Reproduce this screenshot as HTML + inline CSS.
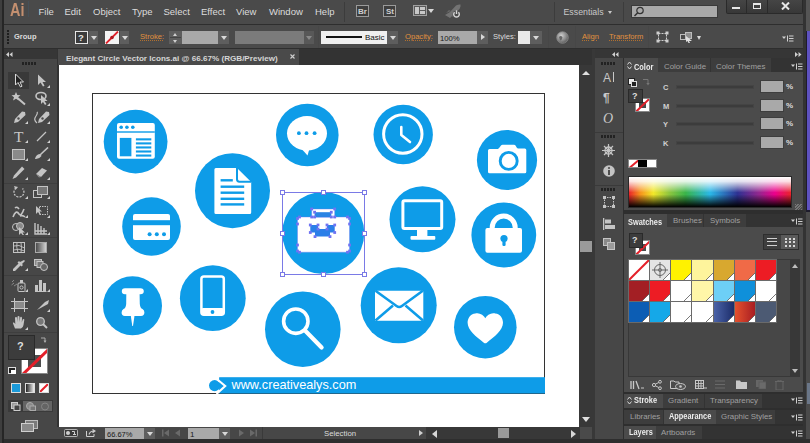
<!DOCTYPE html>
<html><head><meta charset="utf-8">
<style>
*{margin:0;padding:0;box-sizing:border-box}
html,body{width:810px;height:443px;overflow:hidden;background:#2b2b2b;font-family:"Liberation Sans",sans-serif;color:#dcdcdc}
.a{position:absolute}
.t{position:absolute;white-space:nowrap;line-height:1}
.sep{position:absolute;width:1px;background:#3c3c3c}
.dd{position:absolute;background:#5e5e5e}
.dd:after{content:"";position:absolute;left:50%;top:50%;margin-left:-3px;margin-top:-2px;border-left:3px solid transparent;border-right:3px solid transparent;border-top:4px solid #d8d8d8}
.dim:after{border-top-color:#8a8a8a}
.org{color:#e0913f;text-decoration:underline dotted;text-decoration-color:#b07030;text-underline-offset:1px}
</style></head><body>

<!-- MENU BAR -->
<div class="a" style="left:0;top:0;width:810px;height:24px;background:#4a4a4a"></div>

<div class="t" style="left:9.5px;top:0.8px;font-size:18px;font-weight:bold;color:#c49070;transform:scaleX(0.8);transform-origin:left">Ai</div><div class="a" style="left:28px;top:1px;width:1px;height:16px;background:#465058"></div>
<div class="t" style="left:38.5px;top:7px;font-size:9.5px">File</div>
<div class="t" style="left:64.5px;top:7px;font-size:9.5px">Edit</div>
<div class="t" style="left:93px;top:7px;font-size:9.5px">Object</div>
<div class="t" style="left:132px;top:7px;font-size:9.5px">Type</div>
<div class="t" style="left:163.5px;top:7px;font-size:9.5px">Select</div>
<div class="t" style="left:201px;top:7px;font-size:9.5px">Effect</div>
<div class="t" style="left:236px;top:7px;font-size:9.5px">View</div>
<div class="t" style="left:269px;top:7px;font-size:9.5px">Window</div>
<div class="t" style="left:315px;top:7px;font-size:9.5px">Help</div>
<div class="sep" style="left:344px;top:2px;height:20px"></div>
<div class="a" style="left:356px;top:5px;width:13px;height:12px;border:1px solid #9a9a9a;background:#3e3e3e"></div>
<div class="t" style="left:358px;top:7.5px;font-size:8px;font-weight:bold;color:#d0d0d0">Br</div>
<div class="a" style="left:383px;top:5px;width:13px;height:12px;border:1px solid #9a9a9a;background:#3e3e3e"></div>
<div class="t" style="left:386px;top:7.5px;font-size:8px;font-weight:bold;color:#d0d0d0">St</div>
<div class="a" style="left:413px;top:5px;width:14px;height:11px;border:1px solid #a0a0a0;background:#5a5a5a"></div>
<div class="a" style="left:415px;top:7px;width:4px;height:7px;background:#c8c8c8"></div>
<div class="a" style="left:420px;top:7px;width:5px;height:3px;background:#c8c8c8"></div>
<div class="a" style="left:420px;top:11px;width:5px;height:3px;background:#c8c8c8"></div>
<div class="a" style="left:428px;top:9px;border-left:3px solid transparent;border-right:3px solid transparent;border-top:4px solid #d8d8d8"></div>
<svg class="a" style="left:444px;top:4px" width="19" height="15" viewBox="0 0 19 15"><path d="M1 11 L6 8 L12 1.5 Q15 0 16.5 0.5 Q17 2 15.5 5 L9 11 L6 14 Z" fill="#737373"/><path d="M2 9 L5 6 L7 7Z M8 12 L11 9 L9 13Z" fill="#6a6a6a"/><circle cx="12.5" cy="10.3" r="3.7" fill="#4a4a4a"/><path d="M10.6 8.2 A2.8 2.8 0 1 0 14.4 8.2" fill="none" stroke="#d6d6d6" stroke-width="1.4"/><path d="M12.5 6.3 V10" stroke="#d6d6d6" stroke-width="1.4"/></svg>
<div class="sep" style="left:554px;top:2px;height:20px"></div>
<div class="t" style="left:563.5px;top:7.5px;font-size:8.8px;color:#c8c8c8">Essentials</div>
<div class="a" style="left:608px;top:11px;border-left:2.5px solid transparent;border-right:2.5px solid transparent;border-top:3px solid #c8c8c8"></div>
<div class="sep" style="left:623px;top:2px;height:20px"></div>
<div class="a" style="left:631px;top:5px;width:87px;height:13px;background:#a9a9a9;border:1px solid #3a3a3a"></div>
<svg class="a" style="left:633px;top:6px" width="12" height="11" viewBox="0 0 12 11"><circle cx="7" cy="4.5" r="3.2" fill="none" stroke="#333" stroke-width="1.2"/><path d="M4.7 6.8 L1.5 10" stroke="#333" stroke-width="1.5"/></svg>
<div class="a" style="left:726px;top:0;width:77px;height:14px;background:linear-gradient(#454545,#383838);border:1px solid #2a2a2a;border-top:none;border-radius:0 0 2px 2px"></div>
<div class="a" style="left:746px;top:0;width:1px;height:13px;background:#2a2a2a"></div>
<div class="a" style="left:767px;top:0;width:1px;height:13px;background:#2a2a2a"></div>
<div class="a" style="left:732px;top:7px;width:8px;height:2px;background:#e6e6e6"></div>
<div class="a" style="left:753px;top:3px;width:8px;height:6px;border:1.3px solid #e6e6e6;border-top-width:2px"></div>
<svg class="a" style="left:781px;top:2px" width="9" height="8" viewBox="0 0 9 8"><path d="M1 0.5 L8 7.5 M8 0.5 L1 7.5" stroke="#e6e6e6" stroke-width="2"/></svg>

<!-- CONTROL BAR -->
<div class="a" style="left:0;top:24px;width:810px;height:25px;background:#4a4a4a;border-top:1px solid #2e2e2e;border-bottom:1px solid #2e2e2e"></div>
<div class="a" style="left:7px;top:30px;width:2px;height:14px;background:repeating-linear-gradient(#1e1e1e 0 2px,transparent 2px 3px)"></div>
<div class="t" style="left:14px;top:33px;font-size:7.5px;font-weight:bold">Group</div>
<div class="a" style="left:75px;top:31px;width:13px;height:13px;border:1px solid #e6e6e6;background:#3b3b3b"></div>
<div class="t" style="left:78px;top:33px;font-size:9.5px;font-weight:bold;color:#e6e6e6">?</div>
<div class="dd" style="left:89px;top:31px;width:9px;height:13px"></div>
<svg class="a" style="left:105px;top:31px" width="14" height="13" viewBox="0 0 14 13"><rect x="0" y="0" width="14" height="13" fill="#f4f4f4"/><path d="M1 12.5 L13 0.5" stroke="#e0202a" stroke-width="1.8"/><circle cx="7" cy="6.5" r="1.8" fill="#b01820"/></svg>
<div class="dd" style="left:120px;top:31px;width:9px;height:13px"></div>
<div class="t org" style="left:140px;top:33px;font-size:7.6px">Stroke:</div>
<div class="a" style="left:169px;top:31px;width:13px;height:13px;background:#5e5e5e"></div>
<div class="a" style="left:173px;top:33px;border-left:2.5px solid transparent;border-right:2.5px solid transparent;border-bottom:3px solid #cfcfcf"></div>
<div class="a" style="left:173px;top:40px;border-left:2.5px solid transparent;border-right:2.5px solid transparent;border-top:3px solid #cfcfcf"></div>
<div class="a" style="left:170px;top:37px;width:11px;height:1px;background:#444"></div>
<div class="a" style="left:182px;top:31px;width:36px;height:13px;background:#a9a9a9"></div>
<div class="dd" style="left:218px;top:31px;width:11px;height:13px"></div>
<div class="a" style="left:235px;top:31px;width:69px;height:13px;background:#7b7b7b"></div>
<div class="dd dim" style="left:304px;top:31px;width:10px;height:13px;background:#585858"></div>
<div class="sep" style="left:318px;top:26px;height:22px;background:#474747"></div>
<div class="a" style="left:321px;top:31px;width:66px;height:13px;background:#efefef"></div>
<div class="a" style="left:326px;top:36px;width:36px;height:2px;background:#111"></div>
<div class="t" style="left:365px;top:34px;font-size:8px;color:#111">Basic</div>
<div class="dd" style="left:387px;top:31px;width:11px;height:13px"></div>
<div class="t org" style="left:405px;top:33px;font-size:7.6px">Opacity:</div>
<div class="a" style="left:438px;top:31px;width:39px;height:13px;background:#a9a9a9"></div>
<div class="t" style="left:440px;top:34.5px;font-size:7.7px;color:#1a1a1a">100%</div>
<div class="a" style="left:477px;top:31px;width:11px;height:13px;background:#5e5e5e"></div>
<div class="a" style="left:481px;top:34px;border-top:3.5px solid transparent;border-bottom:3.5px solid transparent;border-left:4px solid #d8d8d8"></div>
<div class="t" style="left:493px;top:33px;font-size:7.6px;color:#dcdcdc">Styles:</div>
<div class="a" style="left:518px;top:31px;width:12px;height:13px;background:#e8e8e8"></div>
<div class="dd" style="left:530px;top:31px;width:12px;height:13px"></div>
<div class="sep" style="left:548px;top:26px;height:22px;background:#474747"></div>
<svg class="a" style="left:556px;top:31px" width="13" height="13" viewBox="0 0 13 13"><defs><radialGradient id="glb" cx="0.4" cy="0.35" r="0.7"><stop offset="0" stop-color="#d0d0d0"/><stop offset="0.6" stop-color="#8a8a8a"/><stop offset="1" stop-color="#555"/></radialGradient></defs><circle cx="6.5" cy="6.5" r="5.8" fill="url(#glb)" stroke="#9a9a9a" stroke-width="0.6"/><path d="M3 6 Q5 4 6.5 6.5 Q6 9 4 9.5Z" fill="#666"/></svg>
<div class="sep" style="left:575px;top:26px;height:22px;background:#474747"></div>
<div class="t org" style="left:582px;top:33px;font-size:7.6px">Align</div>
<div class="t org" style="left:609px;top:33px;font-size:7.6px">Transform</div>
<div class="sep" style="left:648px;top:26px;height:22px;background:#474747"></div>
<svg class="a" style="left:656px;top:31px" width="13" height="12" viewBox="0 0 13 12"><rect x="2.5" y="2.5" width="8" height="7" fill="none" stroke="#cfcfcf" stroke-width="1" stroke-dasharray="2 1"/><rect x="0.5" y="0.5" width="3" height="3" fill="#cfcfcf"/><rect x="9.5" y="0.5" width="3" height="3" fill="#cfcfcf"/><rect x="0.5" y="8.5" width="3" height="3" fill="#cfcfcf"/><rect x="9.5" y="8.5" width="3" height="3" fill="#cfcfcf"/></svg>
<svg class="a" style="left:680px;top:31px" width="13" height="12" viewBox="0 0 13 12"><rect x="0.5" y="3.5" width="7" height="5" fill="none" stroke="#bdbdbd" stroke-width="1"/><rect x="5.5" y="1.5" width="6" height="6" fill="#8e8e8e" stroke="#bdbdbd" stroke-width="1"/><path d="M6 5 L12 10 L9 10 L10 12 L8.5 12 L7.5 10 L6 11Z" fill="#e0e0e0"/></svg>
<div class="a" style="left:697px;top:36px;border-left:2.5px solid transparent;border-right:2.5px solid transparent;border-top:4px solid #d8d8d8"></div>
<svg class="a" style="left:782.0px;top:34.5px" width="12" height="7" viewBox="0 0 12 7"><path d="M0 1.5 L4 1.5 L2 4Z" fill="#d0d0d0"/><path d="M5.5 0.5 V6.5" stroke="#d0d0d0" stroke-width="1"/><path d="M7 1 H11.5 M7 3.5 H11.5 M7 6 H11.5" stroke="#d0d0d0" stroke-width="1"/></svg>

<!-- TAB ROW -->
<div class="a" style="left:3px;top:49px;width:592px;height:16px;background:#333"></div>
<div class="a" style="left:58px;top:49px;width:241px;height:16px;background:#4a4a4a"></div>
<div class="t" style="left:66px;top:54.5px;font-size:8.1px;font-weight:bold;color:#d6d6d6">Elegant Circle Vector Icons.ai @ 66.67% (RGB/Preview)</div>
<svg class="a" style="left:290px;top:54px" width="5" height="5" viewBox="0 0 5 5"><path d="M0.5 0.5 L4.5 4.5 M4.5 0.5 L0.5 4.5" stroke="#cfcfcf" stroke-width="1.1"/></svg>

<!-- LEFT TOOLBAR -->
<div class="a" style="left:3px;top:49px;width:54px;height:394px;background:#474747"></div>
<div class="a" style="left:3px;top:49px;width:54px;height:10px;background:#363636"></div>
<svg class="a" style="left:6px;top:52px" width="7" height="5" viewBox="0 0 7 5"><path d="M0 2.5 L3 0 L3 5Z M3.5 2.5 L6.5 0 L6.5 5Z" fill="#d0d0d0"/></svg>
<div class="a" style="left:22px;top:62px;width:15px;height:3px;background:repeating-linear-gradient(90deg,#222 0 2px,transparent 2px 3px)"></div>
<div class="a" style="left:8px;top:72px;width:21px;height:17px;background:#393939"></div>
<svg class="a" style="left:14px;top:73px" width="10" height="15" viewBox="0 0 10 15"><path d="M1.5 1 L1.5 12 L4 9.5 L6.5 14 L8 13.2 L6 9 L9.5 9 Z" fill="#222" stroke="#d8d8d8" stroke-width="1"/></svg>
<svg class="a" style="left:37px;top:74px" width="10" height="13" viewBox="0 0 10 13"><path d="M1 0.5 L1 11 L3.5 8.5 L6 12.5 L7.5 11.8 L5.5 8 L9 8 Z" fill="#c4c4c4"/></svg>
<div class="a" style="left:47px;top:85px;width:0;height:0;border-left:3px solid transparent;border-bottom:3px solid #d0d0d0"></div>
<svg class="a" style="left:11px;top:91px" width="16" height="15" viewBox="0 0 16 15"><path d="M5 1 L6.3 4 L9.5 4.2 L7 6.3 L8 9.5 L5 7.7 L2 9.5 L3 6.3 L0.5 4.2 L3.7 4Z" fill="#c4c4c4"/><path d="M6.5 7 L14 13.5" stroke="#c4c4c4" stroke-width="2"/></svg>
<svg class="a" style="left:35px;top:91px" width="14" height="14" viewBox="0 0 14 14"><ellipse cx="6" cy="5" rx="5" ry="3.5" fill="none" stroke="#c4c4c4" stroke-width="1.6"/><path d="M6 4 L6 13 L8 11 L10 14 L11.5 13 L9.5 10 L12.5 10Z" fill="#c4c4c4"/></svg>
<div class="a" style="left:47px;top:103px;width:0;height:0;border-left:3px solid transparent;border-bottom:3px solid #d0d0d0"></div>
<svg class="a" style="left:13px;top:111px" width="13" height="13" viewBox="0 0 13 13"><path d="M12 1 L9 0.5 L2 8 L1 12 L5 11 L12.5 4 Z" fill="#c4c4c4"/><circle cx="5.5" cy="7.5" r="1.2" fill="#4d4d4d"/></svg>
<div class="a" style="left:25px;top:121px;width:0;height:0;border-left:3px solid transparent;border-bottom:3px solid #d0d0d0"></div>
<svg class="a" style="left:33px;top:111px" width="17" height="13" viewBox="0 0 17 13"><path d="M16 1 L13 0.5 L6 8 L5 12 L9 11 L16.5 4 Z" fill="#c4c4c4"/><circle cx="9.5" cy="7.5" r="1.2" fill="#4d4d4d"/><path d="M4 12 Q0 9 3 5 Q5 2 4 1" fill="none" stroke="#c4c4c4" stroke-width="1.2"/></svg>
<div class="a" style="left:47px;top:121px;width:0;height:0;border-left:3px solid transparent;border-bottom:3px solid #d0d0d0"></div>
<div class="t" style="left:14px;top:128.5px;font-family:'Liberation Serif',serif;font-size:15.5px;color:#c8c8c8">T</div>
<div class="a" style="left:25px;top:140px;width:0;height:0;border-left:3px solid transparent;border-bottom:3px solid #d0d0d0"></div>
<svg class="a" style="left:36px;top:131px" width="11" height="11" viewBox="0 0 11 11"><path d="M1 10 L10 1" stroke="#c4c4c4" stroke-width="1.2"/></svg>
<div class="a" style="left:47px;top:140px;width:0;height:0;border-left:3px solid transparent;border-bottom:3px solid #d0d0d0"></div>
<svg class="a" style="left:12px;top:149px" width="13" height="11" viewBox="0 0 13 11"><rect x="0.5" y="0.5" width="12" height="10" fill="#8a8a8a" stroke="#c4c4c4" stroke-width="1"/></svg>
<div class="a" style="left:25px;top:158px;width:0;height:0;border-left:3px solid transparent;border-bottom:3px solid #d0d0d0"></div>
<svg class="a" style="left:34px;top:147px" width="15" height="13" viewBox="0 0 15 13"><path d="M14 0.5 L6 8" stroke="#c4c4c4" stroke-width="1.6"/><path d="M6.5 7 Q2 7 1 12 Q5 12.5 7.5 9Z" fill="#c4c4c4"/></svg>
<div class="a" style="left:47px;top:158px;width:0;height:0;border-left:3px solid transparent;border-bottom:3px solid #d0d0d0"></div>
<svg class="a" style="left:12px;top:166px" width="13" height="14" viewBox="0 0 13 14"><path d="M10 0.5 L12.5 3 L4 11.5 L0.5 13 L2 9.5Z" fill="#c4c4c4"/></svg>
<div class="a" style="left:25px;top:177px;width:0;height:0;border-left:3px solid transparent;border-bottom:3px solid #d0d0d0"></div>
<svg class="a" style="left:35px;top:167px" width="13" height="11" viewBox="0 0 13 11"><path d="M1 7 L7 1 L12 3.5 L6 10 Z" fill="#c4c4c4"/><path d="M1 7 L6 10 L4 10.5 Z" fill="#8a8a8a"/></svg>
<div class="a" style="left:47px;top:177px;width:0;height:0;border-left:3px solid transparent;border-bottom:3px solid #d0d0d0"></div>
<div class="a" style="left:3px;top:183px;width:54px;height:1px;background:#3e3e3e"></div>
<svg class="a" style="left:13px;top:186px" width="12" height="12" viewBox="0 0 12 12"><path d="M3 2 A5 5 0 1 0 9.5 2.5" fill="none" stroke="#c4c4c4" stroke-width="1.3" stroke-dasharray="2 1.2"/><path d="M1 0 L5 1 L2.5 4Z" fill="#c4c4c4"/></svg>
<div class="a" style="left:25px;top:196px;width:0;height:0;border-left:3px solid transparent;border-bottom:3px solid #d0d0d0"></div>
<svg class="a" style="left:33px;top:186px" width="15" height="12" viewBox="0 0 15 12"><rect x="0.5" y="4.5" width="8" height="7" fill="none" stroke="#c4c4c4" stroke-width="1"/><rect x="4.5" y="0.5" width="10" height="8" fill="#777" stroke="#c4c4c4" stroke-width="1"/></svg>
<div class="a" style="left:47px;top:196px;width:0;height:0;border-left:3px solid transparent;border-bottom:3px solid #d0d0d0"></div>
<svg class="a" style="left:12px;top:205px" width="14" height="13" viewBox="0 0 14 13"><path d="M1 12 Q4 4 7 9 Q9 12 12 4 M3 3 Q5 1 7 4 M8 11 Q11 10 13 12" fill="none" stroke="#c4c4c4" stroke-width="1.6"/></svg>
<div class="a" style="left:25px;top:215px;width:0;height:0;border-left:3px solid transparent;border-bottom:3px solid #d0d0d0"></div>
<svg class="a" style="left:35px;top:205px" width="14" height="11" viewBox="0 0 14 11"><path d="M1 1 L1 9 L3 7 L5 10 L6 9.5 L4.5 6.5 L7 6.5Z" fill="#c4c4c4"/><rect x="4.5" y="1.5" width="8" height="8" fill="none" stroke="#c4c4c4" stroke-width="1" stroke-dasharray="1.5 1"/></svg>
<div class="a" style="left:47px;top:215px;width:0;height:0;border-left:3px solid transparent;border-bottom:3px solid #d0d0d0"></div>
<svg class="a" style="left:12px;top:222px" width="15" height="13" viewBox="0 0 15 13"><circle cx="4" cy="5" r="3.5" fill="none" stroke="#c4c4c4" stroke-width="1"/><circle cx="8" cy="4" r="3.5" fill="#888" stroke="#c4c4c4" stroke-width="1"/><path d="M7 5 L7 13 L9 11 L11 13.5 L12 13 L10.5 10.5 L13 10.5Z" fill="#c4c4c4"/></svg>
<div class="a" style="left:25px;top:232px;width:0;height:0;border-left:3px solid transparent;border-bottom:3px solid #d0d0d0"></div>
<svg class="a" style="left:34px;top:222px" width="14" height="13" viewBox="0 0 14 13"><path d="M1 1 L1 12 L13 12 M4 2 L4 12 M7 4 L7 12 M10 6 L10 12 M1 9 L13 9" stroke="#c4c4c4" stroke-width="1.4" fill="none"/></svg>
<div class="a" style="left:47px;top:232px;width:0;height:0;border-left:3px solid transparent;border-bottom:3px solid #d0d0d0"></div>
<div class="a" style="left:3px;top:237px;width:54px;height:1px;background:#3e3e3e"></div>
<svg class="a" style="left:13px;top:242px" width="12" height="11" viewBox="0 0 12 11"><rect x="0.5" y="0.5" width="11" height="10" fill="none" stroke="#c4c4c4" stroke-width="1"/><path d="M0.5 4 Q6 2 11.5 6 M0.5 8 Q6 6 11.5 9 M4 0.5 Q3 5 5 10.5 M8 0.5 Q9 5 8 10.5" stroke="#c4c4c4" stroke-width="0.9" fill="none"/></svg>
<svg class="a" style="left:35px;top:242px" width="12" height="11" viewBox="0 0 12 11"><defs><linearGradient id="gt1"><stop offset="0" stop-color="#444"/><stop offset="1" stop-color="#d8d8d8"/></linearGradient></defs><rect x="0.5" y="0.5" width="11" height="10" fill="url(#gt1)" stroke="#aaa" stroke-width="1"/></svg>
<svg class="a" style="left:13px;top:259px" width="12" height="12" viewBox="0 0 12 12"><path d="M11 1 L12 2 L9 5 L10 6 L8.5 7.5 L7.5 6.5 L2 12 L0 12 L0 10 L5.5 4.5 L4.5 3.5 L6 2 L7 3Z" fill="#c4c4c4"/></svg>
<div class="a" style="left:25px;top:268px;width:0;height:0;border-left:3px solid transparent;border-bottom:3px solid #d0d0d0"></div>
<svg class="a" style="left:34px;top:259px" width="14" height="12" viewBox="0 0 14 12"><rect x="0.5" y="0.5" width="7" height="6" fill="#888" stroke="#c4c4c4" stroke-width="1"/><rect x="3" y="2.5" width="6" height="6" fill="#777" stroke="#c4c4c4" stroke-width="1"/><circle cx="10" cy="8" r="3.5" fill="#666" stroke="#c4c4c4" stroke-width="1"/></svg>
<div class="a" style="left:3px;top:275px;width:54px;height:1px;background:#3e3e3e"></div>
<svg class="a" style="left:11px;top:279px" width="15" height="13" viewBox="0 0 15 13"><rect x="7" y="4" width="7" height="8.5" rx="1" fill="none" stroke="#c4c4c4" stroke-width="1"/><circle cx="10.5" cy="8.5" r="1.6" fill="none" stroke="#c4c4c4" stroke-width="1"/><rect x="9" y="1" width="3" height="3" fill="#c4c4c4"/><path d="M1 3 L3 1 M0.5 6 L3 4 M3 7 L6 5" stroke="#999" stroke-width="0.8"/></svg>
<div class="a" style="left:25px;top:289px;width:0;height:0;border-left:3px solid transparent;border-bottom:3px solid #d0d0d0"></div>
<svg class="a" style="left:34px;top:279px" width="13" height="13" viewBox="0 0 13 13"><path d="M1 12.5 L12.5 12.5" stroke="#c4c4c4" stroke-width="1"/><rect x="1" y="6" width="3" height="6" fill="#c4c4c4"/><rect x="5" y="1" width="3" height="11" fill="#c4c4c4"/><rect x="9" y="4" width="3" height="8" fill="#c4c4c4"/></svg>
<div class="a" style="left:47px;top:289px;width:0;height:0;border-left:3px solid transparent;border-bottom:3px solid #d0d0d0"></div>
<svg class="a" style="left:11px;top:298px" width="17" height="14" viewBox="0 0 17 14"><rect x="4" y="3" width="9" height="8" fill="#8a8a8a"/><path d="M0 3.5 H17 M0 10.5 H17 M3.5 0 V14 M13.5 0 V14" stroke="#c4c4c4" stroke-width="1"/></svg>
<svg class="a" style="left:36px;top:300px" width="13" height="11" viewBox="0 0 13 11"><path d="M1 10 L9 2 L13 0 L12 4 Z" fill="#c4c4c4"/></svg>
<div class="a" style="left:47px;top:309px;width:0;height:0;border-left:3px solid transparent;border-bottom:3px solid #d0d0d0"></div>
<svg class="a" style="left:12px;top:316px" width="13" height="13" viewBox="0 0 13 13"><path d="M3 12.5 L1 7.5 Q0.5 6 2 6.5 L3.3 8 L3 2 Q3 1 4 1 Q5 1 5 2 L5.3 6 L5.5 1 Q5.5 0 6.5 0 Q7.5 0 7.5 1 L7.6 6 L8.2 1.5 Q8.3 0.7 9.2 0.8 Q10 1 10 2 L9.8 6.5 L10.7 3.5 Q11 2.8 11.8 3 Q12.5 3.3 12.3 4 L11.5 9 Q11 12 9 12.5Z" fill="#c4c4c4"/></svg>
<div class="a" style="left:25px;top:327px;width:0;height:0;border-left:3px solid transparent;border-bottom:3px solid #d0d0d0"></div>
<svg class="a" style="left:36px;top:317px" width="12" height="12" viewBox="0 0 12 12"><circle cx="4.5" cy="4.5" r="3.8" fill="#777" stroke="#c4c4c4" stroke-width="1.3"/><path d="M7 7 L11 11" stroke="#c4c4c4" stroke-width="2"/></svg>
<div class="a" style="left:3px;top:332px;width:54px;height:1px;background:#3e3e3e"></div>
<div class="a" style="left:21px;top:348px;width:27px;height:26px;background:#fff;border:1px solid #888;overflow:hidden"><div class="a" style="left:6px;top:6px;width:13px;height:12px;background:#4d4d4d"></div><div class="a" style="left:-6px;top:11px;width:40px;height:2.5px;background:#e4202a;transform:rotate(-44deg)"></div></div>
<div class="a" style="left:8px;top:335px;width:27px;height:25px;background:#3c3c3c;border:1px solid #2a2a2a"></div>
<div class="t" style="left:17px;top:341px;font-size:11px;font-weight:bold;color:#dedede">?</div>
<svg class="a" style="left:40px;top:337px" width="8" height="7" viewBox="0 0 8 7"><path d="M1 1 H5 V5" fill="none" stroke="#aaa" stroke-width="1"/><path d="M3.5 3.5 L5 6 L6.5 3.5Z" fill="#aaa"/></svg>
<div class="a" style="left:8px;top:367px;width:8px;height:7px;background:#222;border:1px solid #ddd"></div><div class="a" style="left:11px;top:370px;width:5px;height:4px;background:#fff"></div>
<div class="a" style="left:11px;top:383px;width:10px;height:10px;background:#1b9ad9;border:1px solid #ddd"></div>
<div class="a" style="left:25px;top:383px;width:10px;height:10px;background:linear-gradient(90deg,#222,#eee);border:1px solid #ddd"></div>
<div class="a" style="left:39px;top:383px;width:10px;height:10px;background:#fff;border:1px solid #ddd;overflow:hidden"><div class="a" style="left:-3px;top:3px;width:14px;height:2px;background:#e4202a;transform:rotate(-45deg)"></div></div>
<div class="a" style="left:8px;top:400px;width:45px;height:12px;background:#646464;border:1px solid #3a3a3a"></div>
<div class="a" style="left:8px;top:400px;width:15px;height:12px;background:#3a3a3a"></div>
<svg class="a" style="left:11px;top:402px" width="10" height="9" viewBox="0 0 10 9"><rect x="0.5" y="0.5" width="6" height="6" fill="#999" stroke="#ccc" stroke-width="1"/><rect x="3" y="3" width="6" height="5.5" fill="#444" stroke="#ccc" stroke-width="1"/></svg>
<svg class="a" style="left:26px;top:402px" width="10" height="9" viewBox="0 0 10 9"><circle cx="4" cy="4" r="3.5" fill="#888" stroke="#aaa" stroke-width="1"/><rect x="4" y="4" width="5.5" height="4.5" fill="#777" stroke="#aaa" stroke-width="1"/></svg>
<svg class="a" style="left:40px;top:402px" width="10" height="9" viewBox="0 0 10 9"><circle cx="5" cy="4.5" r="3.5" fill="none" stroke="#858585" stroke-width="1"/></svg>
<svg class="a" style="left:21px;top:420px" width="17" height="12" viewBox="0 0 17 12"><rect x="4.5" y="0.5" width="12" height="8" fill="#7a7a7a" stroke="#bdbdbd" stroke-width="1"/><rect x="0.5" y="3.5" width="12" height="8" fill="#8a8a8a" stroke="#cfcfcf" stroke-width="1"/></svg>

<!-- CANVAS -->
<div class="a" style="left:57px;top:65px;width:2px;height:374px;background:#333"></div>
<div class="a" style="left:59px;top:65px;width:520px;height:362px;background:#ffffff"></div>
<svg class="a" style="left:0;top:0" width="810" height="443" viewBox="0 0 810 443">
<rect x="92.5" y="93.5" width="452" height="300" fill="none" stroke="#333" stroke-width="1"/>
<circle cx="135.6" cy="141.6" r="31.9" fill="#0e9ce8"/>
<rect x="117" y="123" width="37.8" height="35.8" rx="2" fill="#fff"/>
<circle cx="121.2" cy="127.2" r="1.8" fill="#0e9ce8"/><circle cx="126.9" cy="127.2" r="1.8" fill="#0e9ce8"/><circle cx="132.8" cy="127.2" r="1.8" fill="#0e9ce8"/>
<rect x="117" y="131.3" width="37.8" height="1.4" fill="#0e9ce8"/>
<rect x="119.8" y="137.9" width="11.6" height="18.4" fill="#0e9ce8"/>
<rect x="135.9" y="138.30" width="15.4" height="2.1" fill="#0e9ce8"/>
<rect x="135.9" y="142.35" width="15.4" height="2.1" fill="#0e9ce8"/>
<rect x="135.9" y="146.40" width="15.4" height="2.1" fill="#0e9ce8"/>
<rect x="135.9" y="150.45" width="15.4" height="2.1" fill="#0e9ce8"/>
<rect x="135.9" y="154.50" width="15.4" height="2.1" fill="#0e9ce8"/>
<circle cx="307.3" cy="135" r="31.3" fill="#0e9ce8"/>
<ellipse cx="307" cy="133.3" rx="20" ry="17.2" fill="#ffffff"/>
<path d="M300 147 L307.5 155.5 L310 147 Z" fill="#ffffff"/>
<circle cx="298.9" cy="133.2" r="1.9" fill="#0e9ce8"/>
<circle cx="306.5" cy="133.2" r="1.9" fill="#0e9ce8"/>
<circle cx="314.6" cy="133.2" r="1.9" fill="#0e9ce8"/>
<circle cx="403.2" cy="134.5" r="29.7" fill="#0e9ce8"/>
<circle cx="402.8" cy="134" r="19.2" fill="none" stroke="#ffffff" stroke-width="3"/>
<path d="M401.3 127 L401.3 135 L410 142" fill="none" stroke="#ffffff" stroke-width="2.6" stroke-linecap="round" stroke-linejoin="round"/>
<circle cx="507" cy="160" r="30.1" fill="#0e9ce8"/>
<path d="M488 150.5 Q488 149 489.5 149 L498 149 L499.5 147.5 L501 145.5 Q501.5 144.8 502.5 144.8 L514 144.8 Q515 144.8 515.5 145.5 L517 148 L518 148.6 L524.8 148.6 Q526.3 148.6 526.3 150.1 L526.3 171.8 Q526.3 173.3 524.8 173.3 L489.5 173.3 Q488 173.3 488 171.8 Z" fill="#fff"/>
<circle cx="508.7" cy="160.9" r="8.5" fill="none" stroke="#0e9ce8" stroke-width="2.9"/>
<circle cx="232.5" cy="190.7" r="37.5" fill="#0e9ce8"/>
<path d="M215.5 168 L237 168 L251.2 182 L251.2 212.5 Q251.2 214 249.7 214 L215.9 214 Q214.4 214 214.4 212.5 L214.4 169.5 Q214.4 168 215.9 168 Z" fill="#ffffff"/>
<path d="M237 168 L237 179.3 Q237 181.7 239.4 181.7 L251.2 181.7" fill="none" stroke="#0e9ce8" stroke-width="2"/>
<rect x="220.6" y="179.1" width="12.2" height="2.4" fill="#0e9ce8"/>
<rect x="220.6" y="185.5" width="23.6" height="2.4" fill="#0e9ce8"/>
<rect x="220.6" y="191.5" width="23.6" height="2.4" fill="#0e9ce8"/>
<rect x="220.6" y="197.6" width="23.6" height="2.4" fill="#0e9ce8"/>
<rect x="220.6" y="203.2" width="23.6" height="2.4" fill="#0e9ce8"/>
<circle cx="151.5" cy="226.5" r="29.3" fill="#0e9ce8"/>
<rect x="133" y="214" width="37" height="26" rx="2" fill="#ffffff"/>
<rect x="133" y="220.2" width="37" height="5" fill="#0e9ce8"/>
<circle cx="149.6" cy="234.3" r="2" fill="#0e9ce8"/>
<circle cx="156.8" cy="234.3" r="2" fill="#0e9ce8"/>
<circle cx="164" cy="234.3" r="2" fill="#0e9ce8"/>
<circle cx="422.5" cy="219.3" r="33" fill="#0e9ce8"/>
<rect x="402.9" y="200.7" width="38.8" height="27.9" rx="1.5" fill="none" stroke="#ffffff" stroke-width="3"/>
<rect x="417" y="230" width="10.4" height="6.5" fill="#ffffff"/>
<rect x="410.5" y="236" width="24.8" height="3.8" rx="1" fill="#ffffff"/>
<circle cx="503.8" cy="235" r="32.4" fill="#0e9ce8"/>
<path d="M492.2 230 L492.2 227.6 A11.5 11.5 0 0 1 515.2 227.6 L515.2 230" fill="none" stroke="#fff" stroke-width="5"/>
<rect x="485.4" y="228" width="36.6" height="24.8" rx="2" fill="#fff"/>
<circle cx="504" cy="238.5" r="3.6" fill="#0e9ce8"/><rect x="502.4" y="239" width="3.2" height="7" rx="1.2" fill="#0e9ce8"/>
<circle cx="132.5" cy="305.7" r="29.5" fill="#0e9ce8"/>
<path d="M125 288.3 L140.5 288.3 Q143.8 288.5 143.8 291.2 Q143.8 294 140.5 294.2 L139.6 294.2 L139.8 304 Q140.3 308.3 142.5 309 Q144.5 310 144.4 312.5 Q144.3 315.9 141 315.9 L124.8 315.9 Q121.6 315.9 121.6 312.5 Q121.6 310 123.5 309 Q125.7 308.3 126.2 304 L126.3 294.2 L125 294.2 Q121.8 294 121.8 291.2 Q121.8 288.5 125 288.3 Z" fill="#fff"/>
<path d="M130.7 315 L134.6 315 L133 326 L132.3 326 Z" fill="#fff"/>
<circle cx="212.8" cy="298.2" r="32.9" fill="#0e9ce8"/>
<rect x="201.4" y="276.5" width="22.4" height="38.3" rx="2.5" fill="none" stroke="#ffffff" stroke-width="2.5"/>
<rect x="201.4" y="308" width="22.4" height="7" rx="1.5" fill="#ffffff"/>
<circle cx="212.5" cy="312" r="1.9" fill="#0e9ce8"/>
<circle cx="302.8" cy="329.2" r="37.8" fill="#0e9ce8"/>
<circle cx="295.8" cy="321.2" r="12.2" fill="none" stroke="#ffffff" stroke-width="3.6"/>
<path d="M305 330.5 L321.6 347.5" stroke="#ffffff" stroke-width="4.2" stroke-linecap="round"/>
<circle cx="398.7" cy="305.3" r="38" fill="#0e9ce8"/>
<rect x="375" y="290.7" width="48.3" height="30" rx="1" fill="#ffffff"/>
<path d="M375.5 290.8 L396.5 306 Q399.2 308 401.9 306 L422.8 290.8" fill="none" stroke="#0e9ce8" stroke-width="2.5"/>
<path d="M375.5 320.5 L393 305.5 M423 320.5 L405.5 305.5" fill="none" stroke="#0e9ce8" stroke-width="2.5"/>
<circle cx="485.3" cy="327.2" r="31.3" fill="#0e9ce8"/>
<path d="M485.3 318.2 C482.5 314 478.5 313.2 475.5 313.4 C470 313.8 467.6 318.5 467.6 322.8 C467.8 330.5 476 336.5 483.8 342.7 Q485.3 344 486.8 342.7 C494.6 336.5 502.8 330.5 503 322.8 C503 318.5 500.6 313.8 495.1 313.4 C492.1 313.2 488.1 314 485.3 318.2 Z" fill="#fff"/>
<circle cx="323.3" cy="233" r="41" fill="#0e9ce8"/>
<rect x="297.5" y="217" width="52" height="35.2" rx="1.5" fill="#fff" stroke="#6f73f2" stroke-width="0.6" stroke-opacity="0.7"/>
<path d="M311.7 217 L311.7 209 L334.7 209 L334.7 217 Z" fill="#fff" stroke="#6f73f2" stroke-width="0.6" stroke-opacity="0.7"/>
<rect x="314.6" y="212.2" width="16.7" height="5" fill="#2a84e4"/>
<path d="M310.3 225 L318 225 L318 229 L327 229 L327 225 L334.7 225 L334.7 232.5 L330 232.5 L330 236.6 L315 236.6 L315 232.5 L310.3 232.5 Z" fill="#2a7fe8"/>
<rect x="296.1" y="217.1" width="2.8" height="2.8" fill="#6f73f2"/>
<rect x="348.2" y="217.1" width="2.8" height="2.8" fill="#6f73f2"/>
<rect x="296.1" y="249.6" width="2.8" height="2.8" fill="#6f73f2"/>
<rect x="348.2" y="249.6" width="2.8" height="2.8" fill="#6f73f2"/>
<rect x="296.1" y="222.6" width="2.8" height="2.8" fill="#6f73f2"/>
<rect x="348.2" y="222.6" width="2.8" height="2.8" fill="#6f73f2"/>
<rect x="296.1" y="243.6" width="2.8" height="2.8" fill="#6f73f2"/>
<rect x="348.2" y="243.6" width="2.8" height="2.8" fill="#6f73f2"/>
<rect x="298.1" y="215.6" width="2.8" height="2.8" fill="#6f73f2"/>
<rect x="346.1" y="215.6" width="2.8" height="2.8" fill="#6f73f2"/>
<rect x="298.1" y="250.8" width="2.8" height="2.8" fill="#6f73f2"/>
<rect x="346.1" y="250.8" width="2.8" height="2.8" fill="#6f73f2"/>
<rect x="310.3" y="215.6" width="2.8" height="2.8" fill="#6f73f2"/>
<rect x="333.3" y="215.6" width="2.8" height="2.8" fill="#6f73f2"/>
<rect x="310.3" y="207.6" width="2.8" height="2.8" fill="#6f73f2"/>
<rect x="333.3" y="207.6" width="2.8" height="2.8" fill="#6f73f2"/>
<rect x="313.2" y="210.8" width="2.8" height="2.8" fill="#6f73f2"/>
<rect x="329.9" y="210.8" width="2.8" height="2.8" fill="#6f73f2"/>
<rect x="313.2" y="215.6" width="2.8" height="2.8" fill="#6f73f2"/>
<rect x="329.9" y="215.6" width="2.8" height="2.8" fill="#6f73f2"/>
<rect x="308.9" y="223.6" width="2.8" height="2.8" fill="#6f73f2"/>
<rect x="316.6" y="223.6" width="2.8" height="2.8" fill="#6f73f2"/>
<rect x="325.6" y="223.6" width="2.8" height="2.8" fill="#6f73f2"/>
<rect x="333.3" y="223.6" width="2.8" height="2.8" fill="#6f73f2"/>
<rect x="308.9" y="231.1" width="2.8" height="2.8" fill="#6f73f2"/>
<rect x="333.3" y="231.1" width="2.8" height="2.8" fill="#6f73f2"/>
<rect x="313.6" y="235.2" width="2.8" height="2.8" fill="#6f73f2"/>
<rect x="328.6" y="235.2" width="2.8" height="2.8" fill="#6f73f2"/>
<rect x="316.6" y="227.6" width="2.8" height="2.8" fill="#6f73f2"/>
<rect x="325.6" y="227.6" width="2.8" height="2.8" fill="#6f73f2"/>
<!-- sel -->
<rect x="282.5" y="192.5" width="82" height="82" fill="none" stroke="#7a7ae6" stroke-width="1"/>
<rect x="280.5" y="190.5" width="4" height="4" fill="#fff" stroke="#7a7ae6" stroke-width="1"/>
<rect x="280.5" y="231.5" width="4" height="4" fill="#fff" stroke="#7a7ae6" stroke-width="1"/>
<rect x="280.5" y="272.5" width="4" height="4" fill="#fff" stroke="#7a7ae6" stroke-width="1"/>
<rect x="321.5" y="190.5" width="4" height="4" fill="#fff" stroke="#7a7ae6" stroke-width="1"/>
<rect x="321.5" y="272.5" width="4" height="4" fill="#fff" stroke="#7a7ae6" stroke-width="1"/>
<rect x="362.5" y="190.5" width="4" height="4" fill="#fff" stroke="#7a7ae6" stroke-width="1"/>
<rect x="362.5" y="231.5" width="4" height="4" fill="#fff" stroke="#7a7ae6" stroke-width="1"/>
<rect x="362.5" y="272.5" width="4" height="4" fill="#fff" stroke="#7a7ae6" stroke-width="1"/>
<rect x="219.3" y="377.2" width="325.7" height="16.3" fill="#0e9ce8"/>
<path d="M219.3 377.2 L226 386 L219.3 393.5 Z" fill="#0e9ce8"/>
<circle cx="214.6" cy="385.6" r="5.6" fill="#0e9ce8"/>
<path d="M213.5 376.3 L225.2 386 L216.5 394" fill="none" stroke="#fff" stroke-width="2.1"/>
<text x="231.5" y="389.3" font-family="Liberation Sans" font-size="12.7" fill="#fff">www.creativealys.com</text>
</svg>
<div class="a" style="left:579px;top:65px;width:13px;height:362px;background:#383838"></div>

<!-- STATUS BAR -->
<div class="a" style="left:57px;top:427px;width:535px;height:12px;background:#474747"></div>
<svg class="a" style="left:64px;top:429px" width="14" height="8" viewBox="0 0 14 8"><rect x="0.5" y="0.5" width="13" height="7" rx="1" fill="#3a3a3a" stroke="#cfcfcf" stroke-width="0.8"/><circle cx="4" cy="4" r="2" fill="#cfcfcf"/><path d="M8 2.5 L10.5 2.5 L10.5 5 M12 5.5 L9 5.5" stroke="#cfcfcf" stroke-width="1" fill="none"/></svg>
<svg class="a" style="left:86px;top:429px" width="10" height="8" viewBox="0 0 10 8"><path d="M0.5 2 V7.5 H8 V5" fill="none" stroke="#cfcfcf" stroke-width="1"/><path d="M3 5.5 Q4 2 8 2 M6.5 0.5 L9 2 L6.5 3.8" fill="none" stroke="#cfcfcf" stroke-width="1.1"/></svg>
<div class="a" style="left:105px;top:428px;width:39px;height:11px;background:#a9a9a9"></div>
<div class="t" style="left:107px;top:431px;font-size:7.5px;color:#1a1a1a">66.67%</div>
<div class="dd" style="left:144px;top:428px;width:11px;height:11px"></div>
<svg class="a" style="left:162px;top:429px" width="20" height="8" viewBox="0 0 20 8"><rect x="0" y="0.5" width="1.5" height="7" fill="#6a6a6a"/><path d="M7 0.5 L2 4 L7 7.5Z" fill="#6a6a6a"/><path d="M18 0.5 L13 4 L18 7.5Z" fill="#6a6a6a"/></svg>
<div class="a" style="left:188px;top:428px;width:31px;height:11px;background:#a9a9a9"></div>
<div class="t" style="left:190px;top:430.5px;font-size:8px;color:#1a1a1a">1</div>
<div class="dd" style="left:219px;top:428px;width:11px;height:11px"></div>
<svg class="a" style="left:238px;top:429px" width="20" height="8" viewBox="0 0 20 8"><path d="M1 0.5 L6 4 L1 7.5Z" fill="#6a6a6a"/><path d="M12 0.5 L17 4 L12 7.5Z" fill="#6a6a6a"/><rect x="17.5" y="0.5" width="1.5" height="7" fill="#6a6a6a"/></svg>
<div class="a" style="left:262px;top:427px;width:1px;height:12px;background:#3a3a3a"></div>
<div class="t" style="left:324px;top:430px;font-size:7.8px;color:#dcdcdc">Selection</div>
<div class="a" style="left:419px;top:430px;border-top:3px solid transparent;border-bottom:3px solid transparent;border-left:4px solid #d0d0d0"></div>
<div class="a" style="left:426px;top:427px;width:154px;height:12px;background:#383838"></div>
<div class="a" style="left:432px;top:429.5px;border-top:4px solid transparent;border-bottom:4px solid transparent;border-right:5px solid #d8d8d8"></div>
<div class="a" style="left:498px;top:428px;width:11px;height:10px;background:#9a9a9a"></div>
<div class="a" style="left:571px;top:429.5px;border-top:4px solid transparent;border-bottom:4px solid transparent;border-left:5px solid #d8d8d8"></div>
<div class="a" style="left:580px;top:427px;width:12px;height:12px;background:#4a4a4a"></div>
<div class="a" style="left:582px;top:71px;border-left:4px solid transparent;border-right:4px solid transparent;border-bottom:4px solid #e0e0e0"></div>
<div class="a" style="left:580px;top:241px;width:12px;height:11px;background:#9a9a9a"></div>
<div class="a" style="left:582px;top:417px;border-left:4px solid transparent;border-right:4px solid transparent;border-top:5px solid #e0e0e0"></div>
<!-- RIGHT ICON COLUMN -->
<div class="a" style="left:592px;top:49px;width:3px;height:394px;background:#383838"></div>
<div class="a" style="left:595px;top:49px;width:28px;height:394px;background:#474747"></div>
<div class="a" style="left:595px;top:49px;width:208px;height:9px;background:#363636"></div>
<svg class="a" style="left:612px;top:52px" width="7" height="5" viewBox="0 0 7 5"><path d="M0 2.5 L3 0 L3 5Z M3.5 2.5 L6.5 0 L6.5 5Z" fill="#d0d0d0"/></svg>
<svg class="a" style="left:795px;top:52px" width="7" height="5" viewBox="0 0 7 5"><path d="M0 0 L3 2.5 L0 5Z M3.5 0 L6.5 2.5 L3.5 5Z" fill="#d0d0d0"/></svg>
<div class="a" style="left:601px;top:62px;width:15px;height:3px;background:repeating-linear-gradient(90deg,#222 0 2px,transparent 2px 3px)"></div>
<div class="t" style="left:603px;top:72px;font-size:12px;color:#c8c8c8">A</div><div class="a" style="left:613px;top:72px;width:1px;height:10px;background:#c8c8c8"></div>
<div class="t" style="left:603px;top:92px;font-size:12px;font-weight:bold;color:#c8c8c8">¶</div>
<div class="t" style="left:603px;top:112px;font-family:'Liberation Serif',serif;font-style:italic;font-size:14px;color:#c8c8c8">O</div>
<div class="a" style="left:595px;top:132px;width:28px;height:1px;background:#3a3a3a"></div>
<div class="a" style="left:601px;top:135px;width:15px;height:3px;background:repeating-linear-gradient(90deg,#222 0 2px,transparent 2px 3px)"></div>
<svg class="a" style="left:602px;top:144px" width="13" height="13" viewBox="0 0 13 13"><circle cx="6.5" cy="6.5" r="3.5" fill="none" stroke="#c4c4c4" stroke-width="1.3"/><path d="M6.5 0 V13 M0 6.5 H13 M2 2 L11 11 M11 2 L2 11" stroke="#c4c4c4" stroke-width="1.2"/><circle cx="6.5" cy="6.5" r="1.3" fill="#c4c4c4"/></svg>
<svg class="a" style="left:603px;top:165px" width="12" height="12" viewBox="0 0 12 12"><circle cx="6" cy="6" r="5.8" fill="#c4c4c4"/><rect x="5" y="5" width="2" height="5" fill="#4d4d4d"/><circle cx="6" cy="3" r="1.1" fill="#4d4d4d"/></svg>
<div class="a" style="left:595px;top:185px;width:28px;height:1px;background:#3a3a3a"></div>
<div class="a" style="left:601px;top:188px;width:15px;height:3px;background:repeating-linear-gradient(90deg,#222 0 2px,transparent 2px 3px)"></div>
<svg class="a" style="left:603px;top:196px" width="12" height="12" viewBox="0 0 12 12"><rect x="1.5" y="1.5" width="9" height="9" fill="none" stroke="#c4c4c4" stroke-width="1" stroke-dasharray="1.5 1"/><rect x="0" y="0" width="3" height="3" fill="#c4c4c4"/><rect x="9" y="0" width="3" height="3" fill="#c4c4c4"/><rect x="0" y="9" width="3" height="3" fill="#c4c4c4"/><rect x="9" y="9" width="3" height="3" fill="#c4c4c4"/></svg>
<svg class="a" style="left:603px;top:218px" width="12" height="12" viewBox="0 0 12 12"><rect x="0" y="0" width="1.3" height="12" fill="#c4c4c4"/><rect x="2" y="1.5" width="6" height="4" fill="#c4c4c4"/><rect x="2" y="7" width="10" height="4" fill="#c4c4c4"/></svg>
<svg class="a" style="left:603px;top:238px" width="12" height="12" viewBox="0 0 12 12"><rect x="0.5" y="0.5" width="7" height="7" fill="#8a8a8a" stroke="#c4c4c4" stroke-width="1"/><rect x="4.5" y="4.5" width="7" height="7" fill="#9a9a9a" stroke="#c4c4c4" stroke-width="1"/></svg>
<!-- RIGHT PANELS -->
<div class="a" style="left:623px;top:58px;width:180px;height:152px;background:#4b4b4b;border-left:1px solid #2e2e2e"></div>
<div class="a" style="left:624px;top:58px;width:179px;height:14px;background:#333"></div>
<div class="a" style="left:624px;top:58px;width:34px;height:14px;background:#4b4b4b"></div>
<div class="a" style="left:658px;top:58px;width:53px;height:14px;background:#3d3d3d;border-right:1px solid #333"></div>
<div class="a" style="left:711px;top:58px;width:61px;height:14px;background:#3d3d3d;border-right:1px solid #333"></div>
<svg class="a" style="left:627px;top:60.5px" width="5" height="9" viewBox="0 0 5 9"><path d="M0.5 3.5 L2.5 1 L4.5 3.5 M0.5 5.5 L2.5 8 L4.5 5.5" fill="none" stroke="#d8d8d8" stroke-width="1"/></svg>
<div class="t" style="left:634px;top:62.5px;font-size:8.8px;font-weight:bold;color:#ececec;transform:scaleX(0.84);transform-origin:left">Color</div>
<div class="t" style="left:664px;top:63px;font-size:7.9px;color:#a0a0a0">Color Guide</div>
<div class="t" style="left:716px;top:63px;font-size:7.9px;color:#a0a0a0">Color Themes</div>
<svg class="a" style="left:791.0px;top:62.5px" width="12" height="7" viewBox="0 0 12 7"><path d="M0 1.5 L4 1.5 L2 4Z" fill="#d0d0d0"/><path d="M5.5 0.5 V6.5" stroke="#d0d0d0" stroke-width="1"/><path d="M7 1 H11.5 M7 3.5 H11.5 M7 6 H11.5" stroke="#d0d0d0" stroke-width="1"/></svg>
<div class="a" style="left:628px;top:78px;width:7px;height:7px;background:#eee;border:1px solid #222"></div><div class="a" style="left:631px;top:81px;width:6px;height:6px;background:#222;border:1px solid #ddd"></div>
<svg class="a" style="left:642px;top:78px" width="8" height="8" viewBox="0 0 8 8"><path d="M1 1.5 H6 V6" fill="none" stroke="#777" stroke-width="1"/><path d="M4.3 5 L6 7.5 L7.7 5Z" fill="#777"/></svg>
<div class="a" style="left:635px;top:98px;width:15px;height:14px;background:#fff;border:1px solid #888;overflow:hidden"><div class="a" style="left:3px;top:3px;width:7px;height:6px;background:#4b4b4b"></div><div class="a" style="left:-4px;top:5px;width:22px;height:2px;background:#e4202a;transform:rotate(-44deg)"></div></div>
<div class="a" style="left:628px;top:89px;width:15px;height:14px;background:#3c3c3c;border:1px solid #2a2a2a"></div>
<div class="t" style="left:632px;top:92px;font-size:9px;font-weight:bold;color:#dedede">?</div>
<div class="t" style="left:663px;top:84.0px;font-size:7.5px;font-weight:bold;color:#cfcfcf">C</div>
<div class="a" style="left:676px;top:85.0px;width:78px;height:4px;background:#3c3c3c;border:1px solid #444"></div>
<div class="a" style="left:760px;top:80.0px;width:24px;height:13px;background:#a9a9a9;border:1px solid #3e3e3e"></div>
<div class="t" style="left:786px;top:83.0px;font-size:8px;font-weight:bold;color:#dcdcdc">%</div>
<div class="t" style="left:663px;top:102.6px;font-size:7.5px;font-weight:bold;color:#cfcfcf">M</div>
<div class="a" style="left:676px;top:103.6px;width:78px;height:4px;background:#3c3c3c;border:1px solid #444"></div>
<div class="a" style="left:760px;top:98.6px;width:24px;height:13px;background:#a9a9a9;border:1px solid #3e3e3e"></div>
<div class="t" style="left:786px;top:101.6px;font-size:8px;font-weight:bold;color:#dcdcdc">%</div>
<div class="t" style="left:663px;top:121.2px;font-size:7.5px;font-weight:bold;color:#cfcfcf">Y</div>
<div class="a" style="left:676px;top:122.2px;width:78px;height:4px;background:#3c3c3c;border:1px solid #444"></div>
<div class="a" style="left:760px;top:117.2px;width:24px;height:13px;background:#a9a9a9;border:1px solid #3e3e3e"></div>
<div class="t" style="left:786px;top:120.2px;font-size:8px;font-weight:bold;color:#dcdcdc">%</div>
<div class="t" style="left:663px;top:139.8px;font-size:7.5px;font-weight:bold;color:#cfcfcf">K</div>
<div class="a" style="left:676px;top:140.8px;width:78px;height:4px;background:#3c3c3c;border:1px solid #444"></div>
<div class="a" style="left:760px;top:135.8px;width:24px;height:13px;background:#a9a9a9;border:1px solid #3e3e3e"></div>
<div class="t" style="left:786px;top:138.8px;font-size:8px;font-weight:bold;color:#dcdcdc">%</div>
<div class="a" style="left:628px;top:159px;width:29px;height:9px;border:1px solid #888;background:linear-gradient(90deg,#fff 0 9px,#000 9px 18px,#fff 18px)"></div>
<div class="a" style="left:629px;top:160px;width:9px;height:7px;overflow:hidden"><div class="a" style="left:-2px;top:3px;width:14px;height:1.5px;background:#e4202a;transform:rotate(-40deg)"></div></div>
<div class="a" style="left:628px;top:176px;width:164px;height:32px;border:1px solid #2a2a2a;background:linear-gradient(to bottom,rgba(255,255,255,1) 0%,rgba(255,255,255,0.85) 15%,rgba(255,255,255,0) 52%,rgba(0,0,0,0) 58%,rgba(0,0,0,1) 100%),linear-gradient(90deg,#e8242a 0%,#f7941d 7%,#f2e82a 15%,#8dc63f 25%,#39b54a 35%,#2ab8e8 50%,#2e3192 67%,#92278f 80%,#ec008c 90%,#e8242a 100%)"></div>
<div class="a" style="left:795px;top:204px;width:7px;height:6px;background:repeating-linear-gradient(135deg,#777 0 1px,transparent 1px 2px)"></div>
<div class="a" style="left:623px;top:210px;width:180px;height:4px;background:#2e2e2e"></div>
<div class="a" style="left:623px;top:214px;width:180px;height:178px;background:#4b4b4b;border-left:1px solid #2e2e2e"></div>
<div class="a" style="left:624px;top:214px;width:179px;height:13px;background:#333"></div>
<div class="a" style="left:624px;top:214px;width:43px;height:13px;background:#4b4b4b"></div>
<div class="a" style="left:667px;top:214px;width:37px;height:13px;background:#3d3d3d;border-right:1px solid #333"></div>
<div class="a" style="left:704px;top:214px;width:43px;height:13px;background:#3d3d3d;border-right:1px solid #333"></div>
<div class="t" style="left:628px;top:217.5px;font-size:8.8px;font-weight:bold;color:#ececec;transform:scaleX(0.84);transform-origin:left">Swatches</div>
<div class="t" style="left:673px;top:217px;font-size:7.9px;color:#a0a0a0">Brushes</div>
<div class="t" style="left:710px;top:217px;font-size:7.9px;color:#a0a0a0">Symbols</div>
<svg class="a" style="left:791.0px;top:217.5px" width="12" height="7" viewBox="0 0 12 7"><path d="M0 1.5 L4 1.5 L2 4Z" fill="#d0d0d0"/><path d="M5.5 0.5 V6.5" stroke="#d0d0d0" stroke-width="1"/><path d="M7 1 H11.5 M7 3.5 H11.5 M7 6 H11.5" stroke="#d0d0d0" stroke-width="1"/></svg>
<div class="a" style="left:635px;top:240px;width:15px;height:15px;background:#fff;border:1px solid #888;overflow:hidden"><div class="a" style="left:3px;top:3px;width:7px;height:7px;background:#4b4b4b"></div><div class="a" style="left:-4px;top:6px;width:22px;height:2px;background:#e4202a;transform:rotate(-44deg)"></div></div>
<div class="a" style="left:629px;top:233px;width:14px;height:15px;background:#3c3c3c;border:1px solid #2a2a2a"></div>
<div class="t" style="left:632px;top:236px;font-size:9px;font-weight:bold;color:#dedede">?</div>
<div class="a" style="left:763px;top:234px;width:36px;height:16px;background:#3e3e3e;border:1px solid #2e2e2e"></div>
<div class="a" style="left:781px;top:235px;width:17px;height:14px;background:#5a5a5a"></div>
<div class="a" style="left:767px;top:238px;width:10px;height:8px;background:repeating-linear-gradient(#cfcfcf 0 1px,transparent 1px 3.5px)"></div>
<div class="a" style="left:785px;top:238px;width:10px;height:9px;background:repeating-linear-gradient(90deg,#d8d8d8 0 2px,transparent 2px 4px);-webkit-mask:repeating-linear-gradient(#000 0 2px,transparent 2px 3.5px);mask:repeating-linear-gradient(#000 0 2px,transparent 2px 3.5px)"></div>
<div class="a" style="left:628px;top:259px;width:163px;height:118px;background:#474747;border:1px solid #383838"></div>
<div class="a" style="left:791px;top:259px;width:9px;height:118px;background:#383838"></div>
<div class="a" style="left:792px;top:264px;border-left:3.5px solid transparent;border-right:3.5px solid transparent;border-bottom:4px solid #bdbdbd"></div>
<div class="a" style="left:792px;top:369px;border-left:3.5px solid transparent;border-right:3.5px solid transparent;border-top:4px solid #bdbdbd"></div>
<div class="a" style="left:628px;top:259px;width:149.0px;height:64px;background:#6a6a6a"></div>
<div class="a" style="left:629.00px;top:260px;width:20.15px;height:20px;background:#fff;overflow:hidden"><svg class="a" style="left:0;top:0" width="20" height="20" viewBox="0 0 20 20"><path d="M0 20 L20 0" stroke="#e4202a" stroke-width="2"/></svg></div>
<div class="a" style="left:650.15px;top:260px;width:20.15px;height:20px;background:#e4e4e4;overflow:hidden"><svg class="a" style="left:0;top:0" width="20" height="20" viewBox="0 0 20 20"><circle cx="10" cy="10" r="5.5" fill="none" stroke="#666" stroke-width="1"/><path d="M10 2 V18 M2 10 H18" stroke="#666" stroke-width="1"/><circle cx="10" cy="10" r="1.6" fill="none" stroke="#666" stroke-width="0.8"/></svg><svg class="a" style="right:0;bottom:0" width="7" height="7" viewBox="0 0 7 7"><path d="M7 0 L7 7 L0 7 Z" fill="#fff"/><path d="M7 0 L0 7" stroke="#555" stroke-width="0.8"/></svg></div>
<div class="a" style="left:671.30px;top:260px;width:20.15px;height:20px;background:#fff200;overflow:hidden"><svg class="a" style="right:0;bottom:0" width="7" height="7" viewBox="0 0 7 7"><path d="M7 0 L7 7 L0 7 Z" fill="#fff"/><path d="M7 0 L0 7" stroke="#555" stroke-width="0.8"/></svg></div>
<div class="a" style="left:692.45px;top:260px;width:20.15px;height:20px;background:#fef49c;overflow:hidden"><svg class="a" style="right:0;bottom:0" width="7" height="7" viewBox="0 0 7 7"><path d="M7 0 L7 7 L0 7 Z" fill="#fff"/><path d="M7 0 L0 7" stroke="#555" stroke-width="0.8"/></svg></div>
<div class="a" style="left:713.60px;top:260px;width:20.15px;height:20px;background:#d8a82f;overflow:hidden"><svg class="a" style="right:0;bottom:0" width="7" height="7" viewBox="0 0 7 7"><path d="M7 0 L7 7 L0 7 Z" fill="#fff"/><path d="M7 0 L0 7" stroke="#555" stroke-width="0.8"/></svg></div>
<div class="a" style="left:734.75px;top:260px;width:20.15px;height:20px;background:#f06a47;overflow:hidden"><svg class="a" style="right:0;bottom:0" width="7" height="7" viewBox="0 0 7 7"><path d="M7 0 L7 7 L0 7 Z" fill="#fff"/><path d="M7 0 L0 7" stroke="#555" stroke-width="0.8"/></svg></div>
<div class="a" style="left:755.90px;top:260px;width:20.15px;height:20px;background:#ed1c24;overflow:hidden"><svg class="a" style="right:0;bottom:0" width="7" height="7" viewBox="0 0 7 7"><path d="M7 0 L7 7 L0 7 Z" fill="#fff"/><path d="M7 0 L0 7" stroke="#555" stroke-width="0.8"/></svg></div>
<div class="a" style="left:629.00px;top:281px;width:20.15px;height:20px;background:#a31f24;overflow:hidden"><svg class="a" style="right:0;bottom:0" width="7" height="7" viewBox="0 0 7 7"><path d="M7 0 L7 7 L0 7 Z" fill="#fff"/><path d="M7 0 L0 7" stroke="#555" stroke-width="0.8"/></svg></div>
<div class="a" style="left:650.15px;top:281px;width:20.15px;height:20px;background:#ed1c24;overflow:hidden"><svg class="a" style="right:0;bottom:0" width="7" height="7" viewBox="0 0 7 7"><path d="M7 0 L7 7 L0 7 Z" fill="#fff"/><path d="M7 0 L0 7" stroke="#555" stroke-width="0.8"/></svg></div>
<div class="a" style="left:671.30px;top:281px;width:20.15px;height:20px;background:#ffffff;overflow:hidden"><svg class="a" style="right:0;bottom:0" width="7" height="7" viewBox="0 0 7 7"><path d="M7 0 L7 7 L0 7 Z" fill="#fff"/><path d="M7 0 L0 7" stroke="#555" stroke-width="0.8"/></svg></div>
<div class="a" style="left:692.45px;top:281px;width:20.15px;height:20px;background:#fff6a8;overflow:hidden"><svg class="a" style="right:0;bottom:0" width="7" height="7" viewBox="0 0 7 7"><path d="M7 0 L7 7 L0 7 Z" fill="#fff"/><path d="M7 0 L0 7" stroke="#555" stroke-width="0.8"/></svg></div>
<div class="a" style="left:713.60px;top:281px;width:20.15px;height:20px;background:#6dcff6;overflow:hidden"><svg class="a" style="right:0;bottom:0" width="7" height="7" viewBox="0 0 7 7"><path d="M7 0 L7 7 L0 7 Z" fill="#fff"/><path d="M7 0 L0 7" stroke="#555" stroke-width="0.8"/></svg></div>
<div class="a" style="left:734.75px;top:281px;width:20.15px;height:20px;background:#0f90da;overflow:hidden"><svg class="a" style="right:0;bottom:0" width="7" height="7" viewBox="0 0 7 7"><path d="M7 0 L7 7 L0 7 Z" fill="#fff"/><path d="M7 0 L0 7" stroke="#555" stroke-width="0.8"/></svg></div>
<div class="a" style="left:755.90px;top:281px;width:20.15px;height:20px;background:#ffffff;overflow:hidden"><svg class="a" style="right:0;bottom:0" width="7" height="7" viewBox="0 0 7 7"><path d="M7 0 L7 7 L0 7 Z" fill="#fff"/><path d="M7 0 L0 7" stroke="#555" stroke-width="0.8"/></svg></div>
<div class="a" style="left:629.00px;top:302px;width:20.15px;height:20px;background:#0c5db4;overflow:hidden"><svg class="a" style="right:0;bottom:0" width="7" height="7" viewBox="0 0 7 7"><path d="M7 0 L7 7 L0 7 Z" fill="#fff"/><path d="M7 0 L0 7" stroke="#555" stroke-width="0.8"/></svg></div>
<div class="a" style="left:650.15px;top:302px;width:20.15px;height:20px;background:#15a8e8;overflow:hidden"><svg class="a" style="right:0;bottom:0" width="7" height="7" viewBox="0 0 7 7"><path d="M7 0 L7 7 L0 7 Z" fill="#fff"/><path d="M7 0 L0 7" stroke="#555" stroke-width="0.8"/></svg></div>
<div class="a" style="left:671.30px;top:302px;width:20.15px;height:20px;background:#ffffff;overflow:hidden"><svg class="a" style="right:0;bottom:0" width="7" height="7" viewBox="0 0 7 7"><path d="M7 0 L7 7 L0 7 Z" fill="#fff"/><path d="M7 0 L0 7" stroke="#555" stroke-width="0.8"/></svg></div>
<div class="a" style="left:692.45px;top:302px;width:20.15px;height:20px;background:#ffffff;overflow:hidden"><svg class="a" style="right:0;bottom:0" width="7" height="7" viewBox="0 0 7 7"><path d="M7 0 L7 7 L0 7 Z" fill="#fff"/><path d="M7 0 L0 7" stroke="#555" stroke-width="0.8"/></svg></div>
<div class="a" style="left:713.60px;top:302px;width:20.15px;height:20px;background:linear-gradient(90deg,#4b63a8,#1c2d6a);overflow:hidden"><svg class="a" style="right:0;bottom:0" width="7" height="7" viewBox="0 0 7 7"><path d="M7 0 L7 7 L0 7 Z" fill="#fff"/><path d="M7 0 L0 7" stroke="#555" stroke-width="0.8"/></svg></div>
<div class="a" style="left:734.75px;top:302px;width:20.15px;height:20px;background:linear-gradient(90deg,#e4512e,#a81d22);overflow:hidden"><svg class="a" style="right:0;bottom:0" width="7" height="7" viewBox="0 0 7 7"><path d="M7 0 L7 7 L0 7 Z" fill="#fff"/><path d="M7 0 L0 7" stroke="#555" stroke-width="0.8"/></svg></div>
<div class="a" style="left:755.90px;top:302px;width:20.15px;height:20px;background:#4c5a73;overflow:hidden"><svg class="a" style="right:0;bottom:0" width="7" height="7" viewBox="0 0 7 7"><path d="M7 0 L7 7 L0 7 Z" fill="#fff"/><path d="M7 0 L0 7" stroke="#555" stroke-width="0.8"/></svg></div>
<svg class="a" style="left:630px;top:380px" width="15" height="10" viewBox="0 0 15 10"><path d="M1 1 V9 M3.5 1 V9 M6 1 L9 9" stroke="#c8c8c8" stroke-width="1.3"/><path d="M11 8 L14 8" stroke="#c8c8c8" stroke-width="1"/></svg>
<svg class="a" style="left:652px;top:380px" width="10" height="10" viewBox="0 0 10 10"><circle cx="2" cy="5" r="1.6" fill="none" stroke="#c8c8c8"/><circle cx="8" cy="1.8" r="1.4" fill="none" stroke="#c8c8c8"/><circle cx="8" cy="8.2" r="1.4" fill="none" stroke="#c8c8c8"/><path d="M3.3 4.2 L6.8 2.5 M3.3 5.8 L6.8 7.5" stroke="#c8c8c8"/></svg>
<svg class="a" style="left:670px;top:380px" width="16" height="10" viewBox="0 0 16 10"><path d="M0.5 1 H4 L5 2 H9 V8.5 H0.5Z" fill="none" stroke="#c8c8c8" stroke-width="1"/><ellipse cx="10.5" cy="6.5" rx="5" ry="3" fill="#535353" stroke="#c8c8c8" stroke-width="1"/><circle cx="10.5" cy="6.5" r="1.3" fill="#c8c8c8"/></svg>
<svg class="a" style="left:695px;top:380px" width="12" height="10" viewBox="0 0 12 10"><rect x="0.5" y="0.5" width="8" height="8" fill="none" stroke="#c8c8c8" stroke-width="1"/><path d="M0.5 3.5 H8.5 M0.5 6 H8.5 M3.5 0.5 V8.5 M6 0.5 V8.5" stroke="#c8c8c8" stroke-width="0.9"/><path d="M9 8 L12 8" stroke="#c8c8c8" stroke-width="1"/></svg>
<svg class="a" style="left:715px;top:380px" width="10" height="9" viewBox="0 0 10 9"><path d="M0 1 H10 M0 4.5 H10 M0 8 H10" stroke="#6a6a6a" stroke-width="1.2"/></svg>
<svg class="a" style="left:736px;top:380px" width="11" height="9" viewBox="0 0 11 9"><path d="M0 0.5 H4 L5 2 H11 V9 H0Z" fill="#c8c8c8"/></svg>
<svg class="a" style="left:756px;top:380px" width="10" height="9" viewBox="0 0 10 9"><rect x="0" y="0" width="7" height="7" fill="#666"/><rect x="3" y="2" width="7" height="7" fill="#6a6a6a" stroke="#5c5c5c"/></svg>
<svg class="a" style="left:775px;top:380px" width="9" height="10" viewBox="0 0 9 10"><path d="M0 1.5 H9 M3 1.5 V0 H6 V1.5 M1 2 V10 H8 V2" fill="none" stroke="#666" stroke-width="1"/></svg>
<div class="a" style="left:623px;top:392px;width:180px;height:2px;background:#2e2e2e"></div>
<div class="a" style="left:623px;top:394px;width:180px;height:14px;background:#333;border-left:1px solid #2e2e2e"></div>
<div class="a" style="left:624px;top:394px;width:39px;height:14px;background:#4b4b4b"></div>
<div class="a" style="left:663px;top:394px;width:42px;height:14px;background:#3d3d3d;border-right:1px solid #333"></div>
<div class="a" style="left:705px;top:394px;width:58px;height:14px;background:#3d3d3d;border-right:1px solid #333"></div>
<svg class="a" style="left:791.0px;top:397px" width="12" height="7" viewBox="0 0 12 7"><path d="M0 1.5 L4 1.5 L2 4Z" fill="#d0d0d0"/><path d="M5.5 0.5 V6.5" stroke="#d0d0d0" stroke-width="1"/><path d="M7 1 H11.5 M7 3.5 H11.5 M7 6 H11.5" stroke="#d0d0d0" stroke-width="1"/></svg>
<svg class="a" style="left:627px;top:395.5px" width="5" height="9" viewBox="0 0 5 9"><path d="M0.5 3.5 L2.5 1 L4.5 3.5 M0.5 5.5 L2.5 8 L4.5 5.5" fill="none" stroke="#d8d8d8" stroke-width="1"/></svg>
<div class="t" style="left:634px;top:396px;font-size:8.8px;font-weight:bold;color:#ececec;transform:scaleX(0.84);transform-origin:left">Stroke</div>
<div class="t" style="left:668px;top:397px;font-size:7.9px;color:#a0a0a0">Gradient</div>
<div class="t" style="left:710px;top:397px;font-size:7.9px;color:#a0a0a0">Transparency</div>
<div class="a" style="left:623px;top:408px;width:180px;height:2px;background:#2e2e2e"></div>
<div class="a" style="left:623px;top:410px;width:180px;height:14px;background:#333;border-left:1px solid #2e2e2e"></div>
<div class="a" style="left:624px;top:410px;width:40px;height:14px;background:#3d3d3d;border-right:1px solid #333"></div>
<div class="a" style="left:664px;top:410px;width:52px;height:14px;background:#4b4b4b"></div>
<div class="a" style="left:716px;top:410px;width:60px;height:14px;background:#3d3d3d;border-right:1px solid #333"></div>
<svg class="a" style="left:791.0px;top:413.5px" width="12" height="7" viewBox="0 0 12 7"><path d="M0 1.5 L4 1.5 L2 4Z" fill="#d0d0d0"/><path d="M5.5 0.5 V6.5" stroke="#d0d0d0" stroke-width="1"/><path d="M7 1 H11.5 M7 3.5 H11.5 M7 6 H11.5" stroke="#d0d0d0" stroke-width="1"/></svg>
<div class="t" style="left:630px;top:413px;font-size:7.9px;color:#a0a0a0">Libraries</div>
<div class="t" style="left:669px;top:412px;font-size:8.8px;font-weight:bold;color:#ececec;transform:scaleX(0.84);transform-origin:left">Appearance</div>
<div class="t" style="left:721px;top:413px;font-size:7.9px;color:#a0a0a0">Graphic Styles</div>
<div class="a" style="left:623px;top:423.5px;width:180px;height:2px;background:#2e2e2e"></div>
<div class="a" style="left:623px;top:425.5px;width:180px;height:14px;background:#333;border-left:1px solid #2e2e2e"></div>
<div class="a" style="left:624px;top:425.5px;width:32px;height:14px;background:#4b4b4b"></div>
<div class="a" style="left:656px;top:425.5px;width:47px;height:14px;background:#3d3d3d;border-right:1px solid #333"></div>
<svg class="a" style="left:791.0px;top:429.5px" width="12" height="7" viewBox="0 0 12 7"><path d="M0 1.5 L4 1.5 L2 4Z" fill="#d0d0d0"/><path d="M5.5 0.5 V6.5" stroke="#d0d0d0" stroke-width="1"/><path d="M7 1 H11.5 M7 3.5 H11.5 M7 6 H11.5" stroke="#d0d0d0" stroke-width="1"/></svg>
<div class="t" style="left:629px;top:427.5px;font-size:8.8px;font-weight:bold;color:#ececec;transform:scaleX(0.84);transform-origin:left">Layers</div>
<div class="t" style="left:661px;top:428.5px;font-size:7.9px;color:#a0a0a0">Artboards</div>
<div class="a" style="left:803px;top:0;width:7px;height:443px;background:#333"></div>
<div class="a" style="left:806px;top:0;width:4px;height:31px;background:#555"></div>
<div class="a" style="left:806px;top:31px;width:4px;height:181px;background:#1e1c2c"></div>
<div class="a" style="left:807px;top:31px;width:3px;height:179px;background:#5e52c0"></div>
<div class="a" style="left:806px;top:212px;width:4px;height:227px;background:#4a4a4a"></div>
<div class="a" style="left:807px;top:383px;width:3px;height:21px;background:#6a7688"></div>
<div class="a" style="left:0;top:439px;width:810px;height:4px;background:#2e2e2e"></div>
<div class="a" style="left:0;top:0;width:2px;height:443px;background:#3e3e3e"></div>
<div class="a" style="left:1.5px;top:0;width:2px;height:443px;background:#262626"></div>
</body></html>
